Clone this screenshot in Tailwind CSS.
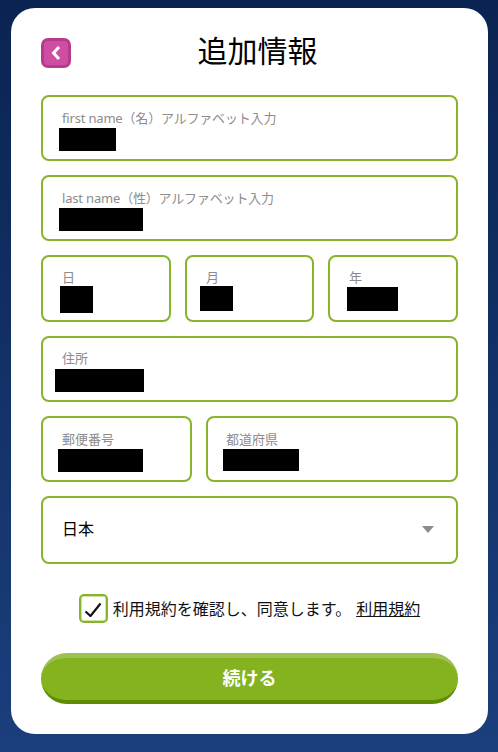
<!DOCTYPE html>
<html lang="ja">
<head>
    <meta charset="UTF-8">
    <meta name="viewport" content="width=device-width, initial-scale=1.0">
    <title>追加情報</title>
    <script src="https://cdn.jsdelivr.net/npm/@tailwindcss/browser@4"></script>
</head>
<body class="h-[752px] overflow-hidden bg-gradient-to-b from-[#0a2452] to-[#1b3f7d] font-['Noto_Sans','Noto_Sans_CJK_JP',sans-serif]">
    <main class="mx-[11px] mt-2 inline-block h-[726px] w-[477px] rounded-[24px] bg-white px-[30px] pt-[30px]">
        <header class="relative flex h-[30px] items-center justify-center">
            <a href="#" class="absolute left-0 top-0 flex h-[30px] w-[30px] items-center justify-center rounded-[7px] border-[3px] border-[#b53c8d] bg-[#cf4ea3]">
                <svg width="12" height="16" viewBox="0 0 12 16" fill="none"><path d="M9 2 L3.5 8 L9 14" stroke="#fff" stroke-width="3"/></svg>
            </a>
            <h1 class="ml-4 -mt-1 text-[30px] leading-[30px] text-black">追加情報</h1>
        </header>

        <form class="mt-[27px] flex flex-col gap-[14px]">
            <div class="h-[66px] rounded-lg border-2 border-[#86b42a] pl-[19px] pt-[12px]">
                <label class="block text-[13px] leading-[18px] tracking-[-0.18px] text-[#8c8c8c]">first name（名）アルファベット入力</label>
                <div class="-ml-[3px] mt-[1px] h-[23px] w-[57px] bg-black"></div>
            </div>
            <div class="h-[66px] rounded-lg border-2 border-[#86b42a] pl-[19px] pt-[12px]">
                <label class="block text-[13px] leading-[18px] tracking-[-0.18px] text-[#8c8c8c]">last name（性）アルファベット入力</label>
                <div class="-ml-[3px] mt-[1px] h-[23px] w-[84px] bg-black"></div>
            </div>
            <div class="flex h-[67px] justify-between">
                <div class="w-[130px] rounded-lg border-2 border-[#86b42a] pl-[19px] pt-[12px]">
                    <label class="block text-[13px] leading-[17px] text-[#8c8c8c]">日</label>
                    <div class="-ml-[2px] h-[27px] w-[33px] bg-black"></div>
                </div>
                <div class="w-[129px] rounded-lg border-2 border-[#86b42a] pl-[19px] pt-[12px]">
                    <label class="block text-[13px] leading-[17px] text-[#8c8c8c]">月</label>
                    <div class="-ml-[6px] h-[25px] w-[33px] bg-black"></div>
                </div>
                <div class="w-[130px] rounded-lg border-2 border-[#86b42a] pl-[19px] pt-[12px]">
                    <label class="block text-[13px] leading-[17px] text-[#8c8c8c]">年</label>
                    <div class="-ml-[2px] mt-[1px] h-[24px] w-[51px] bg-black"></div>
                </div>
            </div>
            <div class="h-[66px] rounded-lg border-2 border-[#86b42a] pl-[19px] pt-[11px]">
                <label class="block text-[13px] leading-[18px] text-[#8c8c8c]">住所</label>
                <div class="-ml-[7px] mt-[2px] h-[23px] w-[89px] bg-black"></div>
            </div>
            <div class="flex h-[66px] gap-[14px]">
                <div class="w-[151px] rounded-lg border-2 border-[#86b42a] pl-[19px] pt-[12px]">
                    <label class="block text-[13px] leading-[18px] text-[#8c8c8c]">郵便番号</label>
                    <div class="-ml-[4px] mt-[1px] h-[23px] w-[85px] bg-black"></div>
                </div>
                <div class="w-[252px] rounded-lg border-2 border-[#86b42a] pl-[18px] pt-[12px]">
                    <label class="block text-[13px] leading-[18px] text-[#8c8c8c]">都道府県</label>
                    <div class="-ml-[3px] mt-[1px] h-[22px] w-[76px] bg-black"></div>
                </div>
            </div>
            <div class="flex h-[68px] items-center justify-between rounded-lg border-2 border-[#86b42a] pb-[2px] pl-[19px] pr-[22px]">
                <span class="text-base text-black">日本</span>
                <svg width="12" height="7" viewBox="0 0 12 7"><path d="M0 0 H12 L6 7 Z" fill="#8c8c8c"/></svg>
            </div>

            <div class="mt-4 flex h-[29px] items-center justify-center">
                <span class="flex h-[29px] w-[29px] items-center justify-center rounded-[5px] border-2 border-[#86b42a] shadow-[inset_0_0_0_1px_rgba(134,180,42,0.4)]">
                    <svg width="18" height="16" viewBox="0 0 18 16" fill="none"><path d="M1.5 10.5 L6.5 15 L16.5 2.5" stroke="#111" stroke-width="2.2"/></svg>
                </span>
                <span class="ml-[5px] text-base text-[#111]">利用規約を確認し、同意します。</span>
                <a href="#" class="ml-[5px] text-base text-[#111] underline">利用規約</a>
            </div>

            <button type="button" class="mt-4 h-[51px] w-full rounded-full border-b-[4px] border-t-[5px] border-b-[#5e8d05] border-t-[#9fc153] bg-[#84b31f] pb-[2px] text-lg font-bold text-white">続ける</button>
        </form>
    </main>
</body>
</html>
